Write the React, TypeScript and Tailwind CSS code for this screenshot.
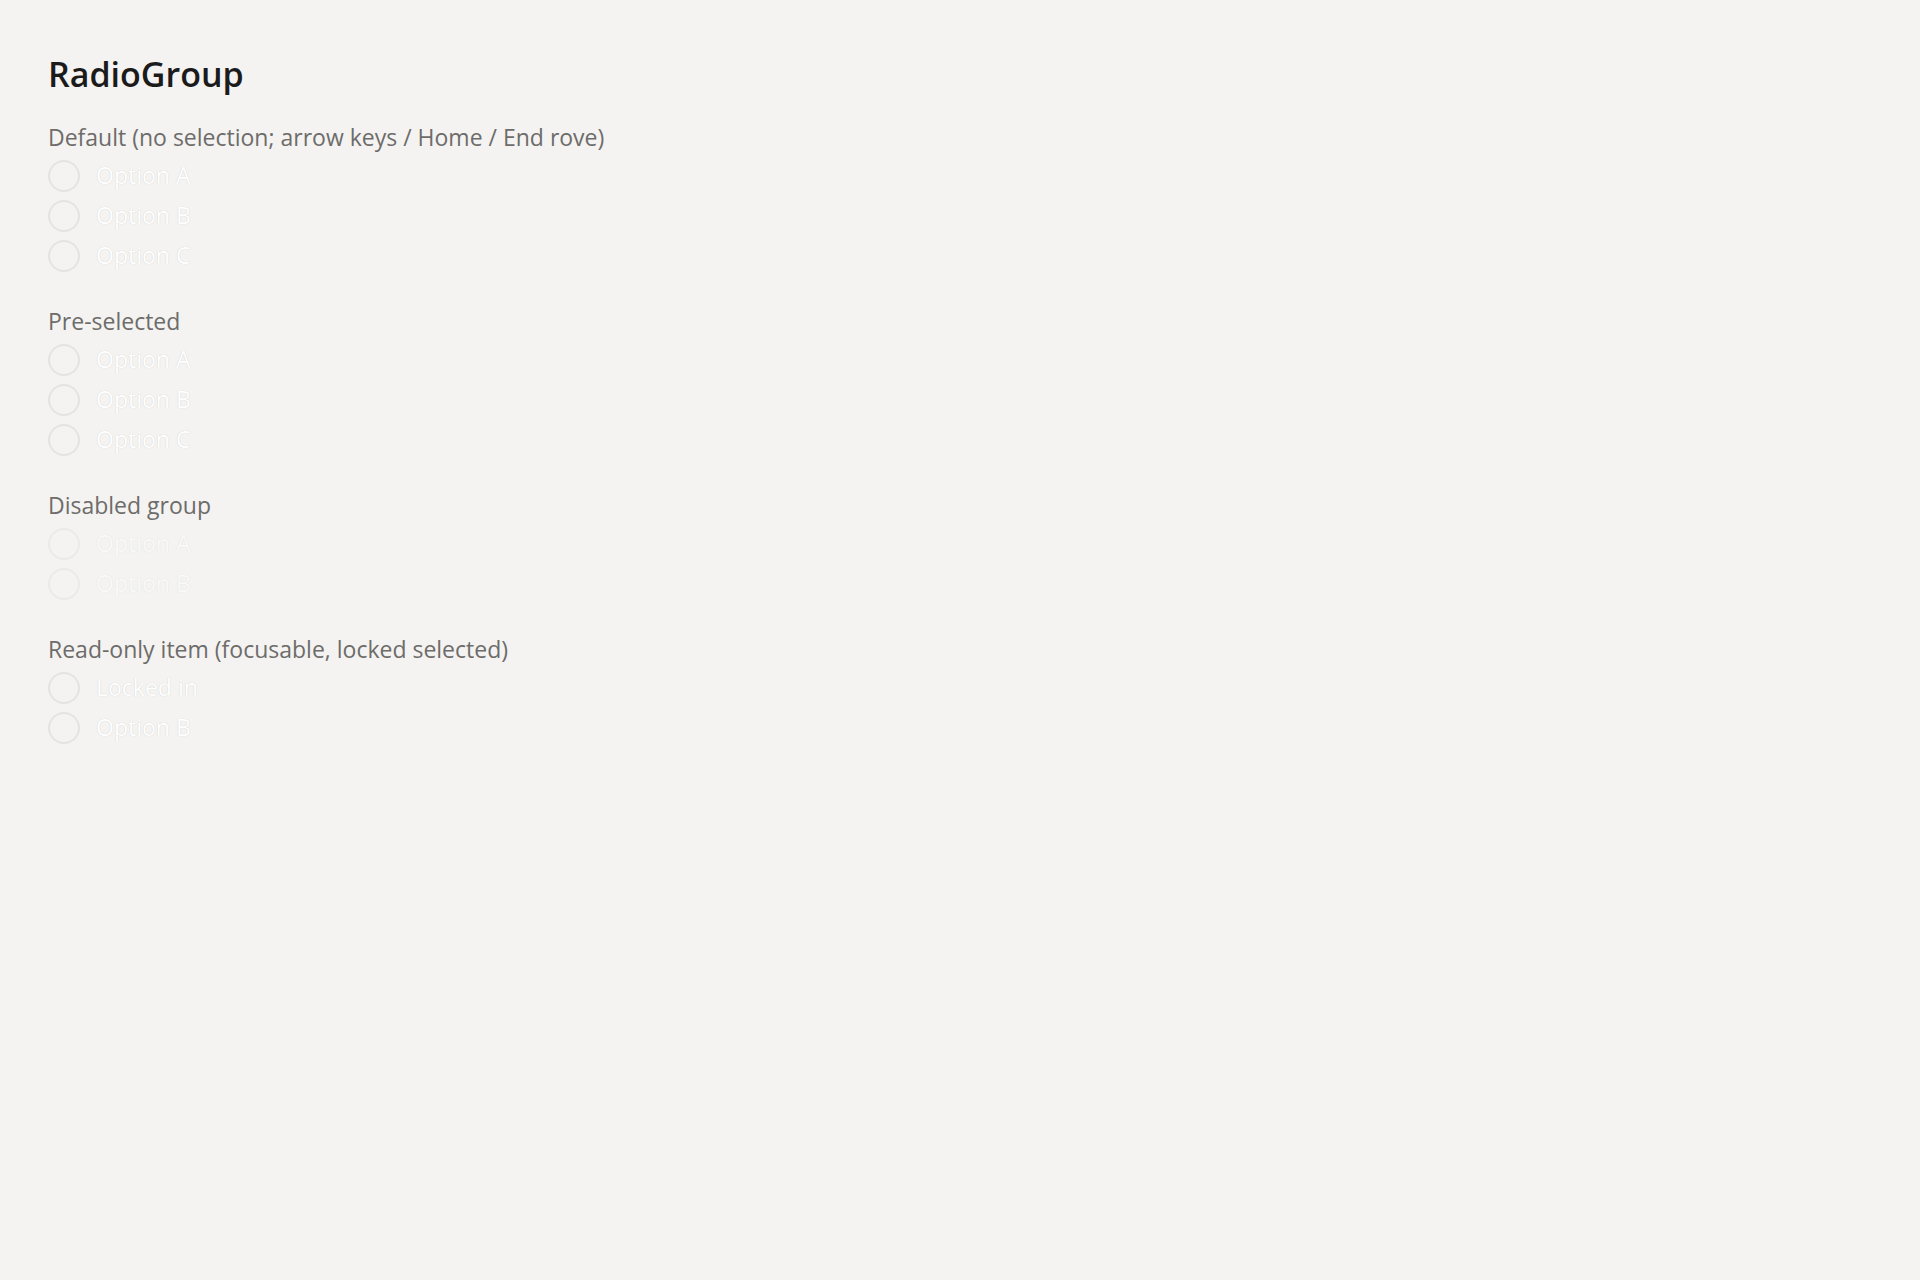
import React from 'react';

type Option = { value: string; label: string };

type GroupProps = {
  title: string;
  options: Option[];
  disabled?: boolean;
};

const abc: Option[] = [
  { value: 'a', label: 'Option A' },
  { value: 'b', label: 'Option B' },
  { value: 'c', label: 'Option C' },
];

const RadioGroup = ({ title, options, disabled }: GroupProps) => {
  return (
    <section className="flex flex-col">
      <h2 className="text-[23px] leading-[30px] text-[#6d6c6a]">{title}</h2>
      <div role="radiogroup" aria-label={title} className="mt-1 flex flex-col">
        {options.map(opt => (
          <div
            key={opt.value}
            role="radio"
            aria-checked={false}
            aria-disabled={disabled}
            className={`flex h-10 items-center gap-4 ${disabled ? 'opacity-50' : ''}`}
          >
            <span className="h-8 w-8 shrink-0 rounded-full border-2 border-[#e5e3e0]" />
            <span className="text-[23px] leading-none text-white [text-shadow:0_0_1px_rgba(0,0,0,0.2)]">
              {opt.label}
            </span>
          </div>
        ))}
      </div>
    </section>
  );
};

const App = () => {
  return (
    <div className="min-h-screen bg-[#f4f3f1] px-12 pt-[53px] font-['Open_Sans',sans-serif]">
      <h1 className="text-[34px] font-semibold leading-tight text-[#1b1b1b]">RadioGroup</h1>

      <div className="mt-[26px] flex flex-col gap-[30px]">
        <RadioGroup title="Default (no selection; arrow keys / Home / End rove)" options={abc} />
        <RadioGroup title="Pre-selected" options={abc} />
        <RadioGroup title="Disabled group" options={abc.slice(0, 2)} disabled />
        <RadioGroup
          title="Read-only item (focusable, locked selected)"
          options={[
            { value: 'locked', label: 'Locked in' },
            { value: 'b', label: 'Option B' },
          ]}
        />
      </div>
    </div>
  );
};

export default App;
